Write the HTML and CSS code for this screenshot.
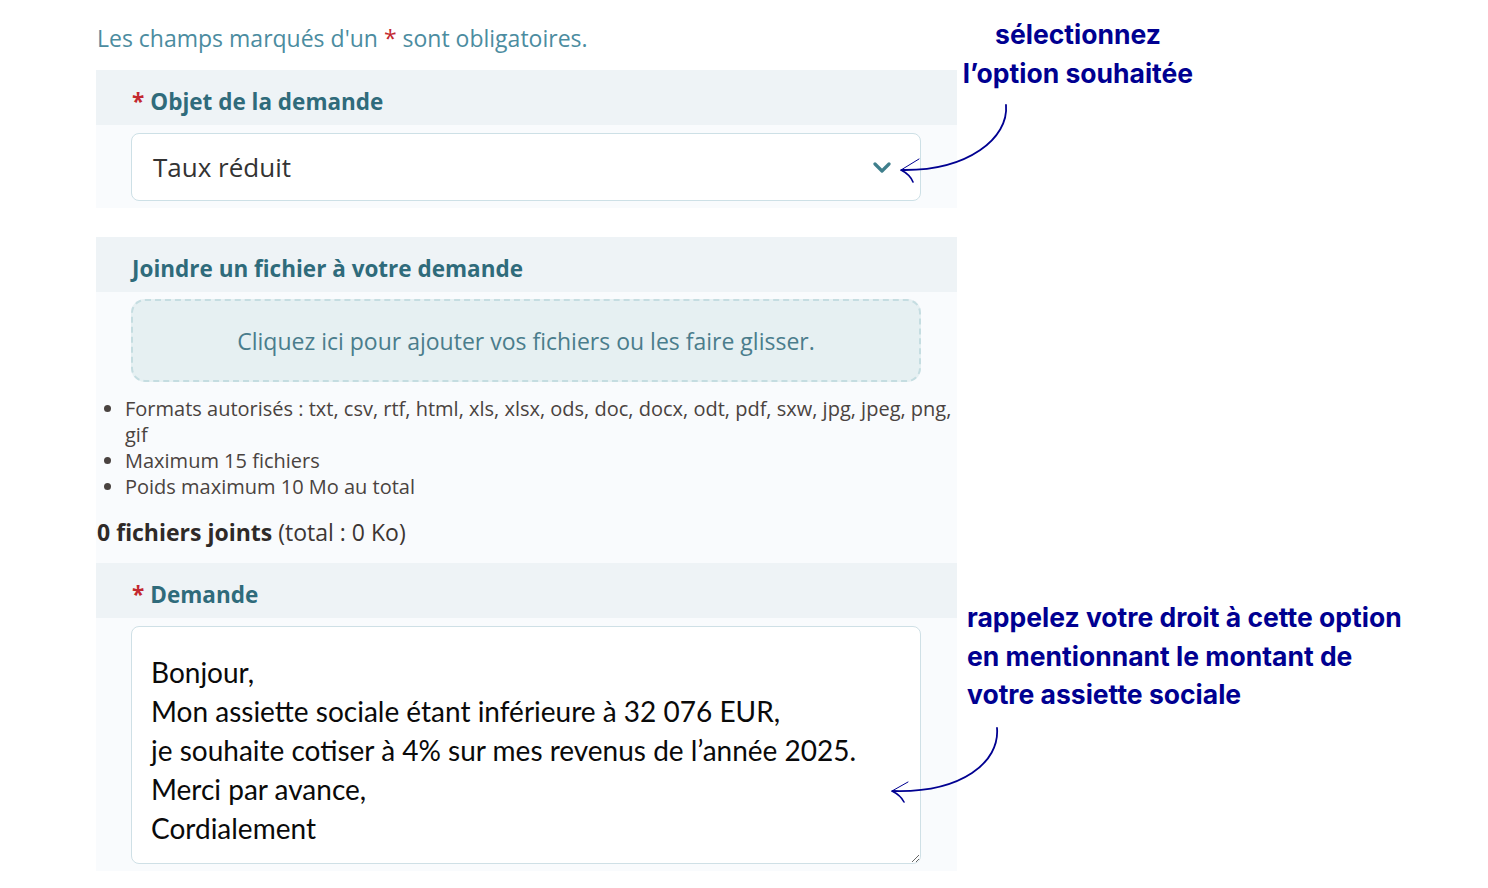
FILE: index.html
```html
<!DOCTYPE html>
<html lang="fr">
<head>
    <meta charset="UTF-8">
    <meta name="viewport" content="width=device-width, initial-scale=1.0">
    <title>Demande - taux réduit</title>
    <link rel="stylesheet" href="styles.css">
</head>
<body>
    <div class="page">
        <form class="form">
            <p class="notice">Les champs marqués d'un <span class="req">*</span> sont obligatoires.</p>

            <section class="field">
                <div class="field-head"><span class="req">*</span> Objet de la demande</div>
                <div class="field-body">
                    <div class="select">
                        <span>Taux réduit</span>
                        <svg class="chevron" width="18" height="12" viewBox="0 0 18 12">
                            <path d="M2 2 L9 9 L16 2" fill="none" stroke="#3f7f8c" stroke-width="3.2" stroke-linecap="round" stroke-linejoin="round"/>
                        </svg>
                    </div>
                </div>
            </section>

            <section class="field field-files">
                <div class="field-head">Joindre un fichier à votre demande</div>
                <div class="field-body files">
                    <div class="dropzone">Cliquez ici pour ajouter vos fichiers ou les faire glisser.</div>
                    <ul class="rules">
                        <li>Formats autorisés : txt, csv, rtf, html, xls, xlsx, ods, doc, docx, odt, pdf, sxw, jpg, jpeg, png,<br>gif</li>
                        <li>Maximum 15 fichiers</li>
                        <li>Poids maximum 10 Mo au total</li>
                    </ul>
                    <p class="count"><strong>0 fichiers joints</strong> (total : 0 Ko)</p>
                </div>
            </section>

            <section class="field">
                <div class="field-head"><span class="req">*</span> Demande</div>
                <div class="field-body">
                    <textarea class="message" rows="5">Bonjour,
Mon assiette sociale étant inférieure à 32 076 EUR,
je souhaite cotiser à 4% sur mes revenus de l’année 2025.
Merci par avance,
Cordialement</textarea>
                </div>
            </section>
        </form>

        <!-- annotations -->
        <p class="note note-select">sélectionnez<br>l’option souhaitée</p>
        <p class="note note-text">rappelez votre droit à cette option<br>en mentionnant le montant de<br>votre assiette sociale</p>

        <svg class="arrows" width="1488" height="888" viewBox="0 0 1488 888">
            <g fill="none" stroke="#000091" stroke-linecap="round">
                <path d="M1006 105 C1009 138 968 171 902 170" stroke-width="1.8"/>
                <path d="M901 170 L919 159" stroke-width="1"/>
                <path d="M901 170 C907 173 911 177 913 182" stroke-width="1.6"/>
                <path d="M997 728 C1000 762 962 793 893 791" stroke-width="1.8"/>
                <path d="M892 791 L908 782" stroke-width="1"/>
                <path d="M892 791 C898 794 902 798 904 802" stroke-width="1.6"/>
            </g>
        </svg>
    </div>
</body>
</html>
```

FILE: styles.css
```css
body {
    margin: 0;
    background: #fff;
    font-family: 'Open Sans', 'Noto Sans', sans-serif;
}

.page {
    position: relative;
    width: 1488px;
    height: 888px;
    overflow: hidden;
}

.form {
    width: 861px;
    margin-left: 96px;
    padding-top: 23px;
}

.notice {
    margin: 0 0 16px 1px;
    font-size: 23px;
    line-height: 31px;
    color: #4b8ca0;
}

.req {
    color: #c3282f;
}

.field-files {
    margin-top: 29px;
}

.field-head {
    box-sizing: border-box;
    height: 55px;
    display: flex;
    align-items: center;
    gap: 6px;
    padding: 7px 0 0 36px;
    background: #eef3f6;
    color: #2f6b7b;
    font-size: 22.5px;
    font-weight: 700;
}

.field-body {
    background: #f9fbfd;
    padding: 8px 36px 7px 35px;
}

.select {
    height: 66px;
    display: flex;
    align-items: center;
    justify-content: space-between;
    padding: 0 29px 0 21px;
    background: #fff;
    border: 1px solid #cde0e6;
    border-radius: 8px;
    font-size: 26px;
    color: #333;
}

.chevron {
    margin-top: 2px;
}

.files {
    padding: 7px 0 16px 0;
}

.dropzone {
    margin: 0 36px 0 35px;
    height: 79px;
    display: flex;
    align-items: center;
    justify-content: center;
    background: #e6f0f2;
    border: 2px dashed #c5dde1;
    border-radius: 14px;
    font-size: 23px;
    color: #4a7d8c;
}

.rules {
    margin: 14px 0 0 0;
    padding-left: 29px;
    font-size: 20px;
    line-height: 26px;
    color: #4a4340;
}

.count {
    margin: 17px 0 0 1px;
    font-size: 23px;
    line-height: 30px;
    color: #3d3634;
}

.count strong {
    color: #2f2a28;
}

.message {
    display: block;
    box-sizing: border-box;
    width: 100%;
    height: 238px;
    margin: 0;
    padding: 26px 19px 10px 19px;
    border: 1px solid #cfe0e6;
    border-radius: 8px;
    background: #fff;
    font-family: 'Lato', 'Noto Sans', sans-serif;
    font-size: 28px;
    line-height: 39px;
    color: #0a0a0a;
    resize: vertical;
}

.note {
    position: absolute;
    margin: 0;
    font-family: 'Inter', 'Lato', sans-serif;
    font-size: 26.5px;
    font-weight: 700;
    line-height: 39px;
    color: #000091;
}

.note-select {
    left: 958px;
    top: 15px;
    width: 240px;
    text-align: center;
}

.note-text {
    left: 967px;
    top: 598px;
    white-space: nowrap;
    line-height: 38.5px;
}

.arrows {
    position: absolute;
    left: 0;
    top: 0;
    pointer-events: none;
}
```
